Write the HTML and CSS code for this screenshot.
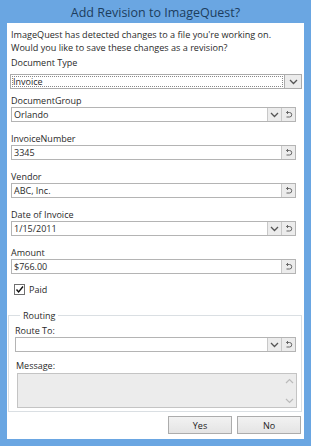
FILE: index.html
```html
<!DOCTYPE html>
<html lang="en">
<head>
    <meta charset="UTF-8">
    <title>Add Revision to ImageQuest?</title>
    <link rel="stylesheet" href="styles.css">
</head>
<body>

<div class="window">
    <div class="titlebar">Add Revision to ImageQuest?</div>

    <div class="content">
        <p class="intro">ImageQuest has detected changes to a file you're working on.<br>Would you like to save these changes as a revision?</p>

        <div class="label doctype-label">Document Type</div>
        <div class="combo doctype">
            <div class="combo-text"><span class="focus">Invoice</span></div>
            <div class="btn-drop"><svg width="9" height="6" viewBox="0 0 9 6"><path d="M1 1 L4.5 4.5 L8 1" fill="none" stroke="#555" stroke-width="1.3"/></svg></div>
        </div>

        <div class="fields">
            <div class="field">
                <div class="label">DocumentGroup</div>
                <div class="box">
                    <div class="box-text">Orlando</div>
                    <div class="btn-drop"><svg width="9" height="6" viewBox="0 0 9 6"><path d="M1 1 L4.5 4.5 L8 1" fill="none" stroke="#555" stroke-width="1.3"/></svg></div>
                    <div class="btn-undo"><svg width="9" height="9" viewBox="0 0 9 9"><path d="M2.5 2.5 H5.5 A2.2 2.2 0 0 1 5.5 7 H2.5 M4 1 L2.5 2.5 L4 4" fill="none" stroke="#666" stroke-width="1"/></svg></div>
                </div>
            </div>
            <div class="field">
                <div class="label">InvoiceNumber</div>
                <div class="box">
                    <div class="box-text">3345</div>
                    <div class="btn-undo"><svg width="9" height="9" viewBox="0 0 9 9"><path d="M2.5 2.5 H5.5 A2.2 2.2 0 0 1 5.5 7 H2.5 M4 1 L2.5 2.5 L4 4" fill="none" stroke="#666" stroke-width="1"/></svg></div>
                </div>
            </div>
            <div class="field">
                <div class="label">Vendor</div>
                <div class="box">
                    <div class="box-text">ABC, Inc.</div>
                    <div class="btn-undo"><svg width="9" height="9" viewBox="0 0 9 9"><path d="M2.5 2.5 H5.5 A2.2 2.2 0 0 1 5.5 7 H2.5 M4 1 L2.5 2.5 L4 4" fill="none" stroke="#666" stroke-width="1"/></svg></div>
                </div>
            </div>
            <div class="field">
                <div class="label">Date of Invoice</div>
                <div class="box">
                    <div class="box-text">1/15/2011</div>
                    <div class="btn-drop"><svg width="9" height="6" viewBox="0 0 9 6"><path d="M1 1 L4.5 4.5 L8 1" fill="none" stroke="#555" stroke-width="1.3"/></svg></div>
                    <div class="btn-undo"><svg width="9" height="9" viewBox="0 0 9 9"><path d="M2.5 2.5 H5.5 A2.2 2.2 0 0 1 5.5 7 H2.5 M4 1 L2.5 2.5 L4 4" fill="none" stroke="#666" stroke-width="1"/></svg></div>
                </div>
            </div>
            <div class="field">
                <div class="label">Amount</div>
                <div class="box">
                    <div class="box-text">$766.00</div>
                    <div class="btn-undo"><svg width="9" height="9" viewBox="0 0 9 9"><path d="M2.5 2.5 H5.5 A2.2 2.2 0 0 1 5.5 7 H2.5 M4 1 L2.5 2.5 L4 4" fill="none" stroke="#666" stroke-width="1"/></svg></div>
                </div>
            </div>
        </div>

        <div class="check-row">
            <span class="checkbox"><svg width="9" height="9" viewBox="0 0 9 9"><path d="M1.5 4.5 L3.6 7 L8 1.5" fill="none" stroke="#111" stroke-width="1.4"/></svg></span>
            <span>Paid</span>
        </div>

        <fieldset class="routing">
            <legend>Routing</legend>
            <div class="label route-label">Route To:</div>
            <div class="box route-box">
                <div class="box-text"></div>
                <div class="btn-drop"><svg width="9" height="6" viewBox="0 0 9 6"><path d="M1 1 L4.5 4.5 L8 1" fill="none" stroke="#555" stroke-width="1.3"/></svg></div>
                <div class="btn-undo"><svg width="9" height="9" viewBox="0 0 9 9"><path d="M2.5 2.5 H5.5 A2.2 2.2 0 0 1 5.5 7 H2.5 M4 1 L2.5 2.5 L4 4" fill="none" stroke="#666" stroke-width="1"/></svg></div>
            </div>
            <div class="label message-label">Message:</div>
            <div class="message">
                <div class="scroll">
                    <svg width="9" height="6" viewBox="0 0 9 6"><path d="M1 5 L4.5 1.5 L8 5" fill="none" stroke="#bbb" stroke-width="1.2"/></svg>
                    <svg width="9" height="6" viewBox="0 0 9 6"><path d="M1 1 L4.5 4.5 L8 1" fill="none" stroke="#bbb" stroke-width="1.2"/></svg>
                </div>
            </div>
        </fieldset>

        <div class="buttons">
            <button class="btn">Yes</button>
            <button class="btn">No</button>
        </div>
    </div>
</div>

</body>
</html>
```

FILE: styles.css
```css
html, body {
    margin: 0;
    padding: 0;
    font-family: "Open Sans", sans-serif;
    font-size: 9px;
    color: #2a2a2a;
}

.window {
    width: 311px;
    height: 446px;
    box-sizing: border-box;
    background: #6aa6e2;
    padding: 0 7px 7px 7px;
    display: flex;
    flex-direction: column;
}

.titlebar {
    height: 23px;
    line-height: 25px;
    text-align: center;
    font-size: 12.5px;
    color: #1c3d5e;
}

.content {
    flex: 1;
    background: #fff;
    padding: 5px 0 0 0;
    display: flex;
    flex-direction: column;
}

.intro {
    margin: 0 0 0 4px;
    line-height: 13px;
    font-size: 9.1px;
}

.label {
    line-height: 13px;
}

.doctype-label {
    margin: 2px 0 0 4px;
}

.combo {
    display: flex;
    height: 15px;
    margin: 5px 2px 0 3px;
    border: 1px solid #acacac;
    box-sizing: border-box;
    background: #fff;
}

.combo-text {
    flex: 1;
    padding: 1px;
}

.focus {
    display: block;
    height: 11px;
    line-height: 11px;
    padding-left: 1px;
    outline: 1px dotted #888;
    outline-offset: -1px;
}

.combo .btn-drop {
    border-left: 1px solid #acacac;
    width: 16px;
}

.fields {
    margin: 5px 8px 0 4px;
}

.field {
    margin-bottom: 10px;
}

.field:last-child {
    margin-bottom: 9px;
}

.box {
    display: flex;
    height: 15px;
    border: 1px solid #b4b4b4;
    box-sizing: border-box;
    background: #fff;
}

.box-text {
    flex: 1;
    line-height: 13px;
    padding-left: 2px;
}

.btn-drop, .btn-undo {
    width: 13px;
    display: flex;
    align-items: center;
    justify-content: center;
    background: #ececec;
    border-left: 1px solid #c8c8c8;
}

.check-row {
    display: flex;
    align-items: center;
    gap: 4px;
    margin: 0 0 0 7px;
    line-height: 13px;
}

.checkbox {
    width: 9px;
    height: 9px;
    border: 1px solid #707070;
    display: flex;
    align-items: center;
    justify-content: center;
    background: #fff;
}

.routing {
    margin: 14px 2px 0 1px;
    padding: 0 5px 3px 6px;
    border: 1px solid #dadfe3;
}

.routing legend {
    padding: 0 3px;
    margin-left: 5px;
    line-height: 11px;
}

.route-label {
    margin-top: 3px;
}

.message-label {
    margin-top: 7px;
    margin-left: 1px;
}

.message {
    height: 35px;
    margin: 1px -1px 0 2px;
    border: 1px solid #c4c4c4;
    box-sizing: border-box;
    background: #ececec;
    display: flex;
    justify-content: flex-end;
}

.scroll {
    width: 14px;
    display: flex;
    flex-direction: column;
    justify-content: space-between;
    align-items: center;
    padding: 4px 0 3px;
}

.buttons {
    display: flex;
    justify-content: flex-end;
    gap: 5px;
    margin: 4px 3px 0 0;
}

.btn {
    width: 64px;
    height: 18px;
    font-family: "Open Sans", sans-serif;
    font-size: 9px;
    color: #222;
    border: 1px solid #acacac;
    background: linear-gradient(#f2f2f2, #e4e4e4);
    padding: 0;
}
```
